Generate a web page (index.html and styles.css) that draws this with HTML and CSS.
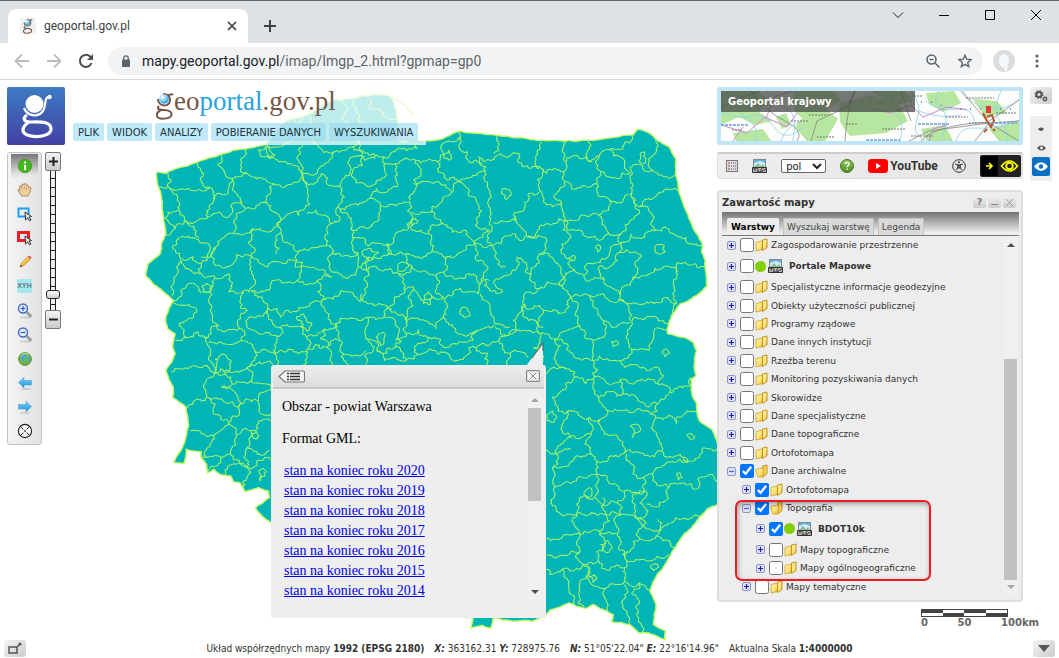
FILE: index.html
```html
<!DOCTYPE html>
<html lang="pl">
<head>
<meta charset="utf-8">
<title>geoportal.gov.pl</title>
<link rel="stylesheet" href="styles.css">
</head>
<body>
<svg class="defs" aria-hidden="true">
  <defs>
    <linearGradient id="gold" x1="0" y1="0" x2="1" y2="1"><stop offset="0" stop-color="#fff3a0"/><stop offset=".6" stop-color="#fae27a"/><stop offset="1" stop-color="#e0a920"/></linearGradient>
    <linearGradient id="leaf" x1="0" y1="0" x2="0" y2="1"><stop offset="0" stop-color="#8fc954"/><stop offset="1" stop-color="#4a8d1f"/></linearGradient>
    <linearGradient id="sky" x1="0" y1="0" x2="0" y2="1"><stop offset="0" stop-color="#79cdf7"/><stop offset="1" stop-color="#1d93da"/></linearGradient>
    <radialGradient id="ball" cx=".35" cy=".3" r=".7"><stop offset="0" stop-color="#fff"/><stop offset=".5" stop-color="#8fd3f3"/><stop offset="1" stop-color="#2ba3dc"/></radialGradient>
    <symbol id="i-folder" viewBox="0 0 13 14"><path d="M1 4.500L7.500 3v8.500L1 13z" fill="url(#gold)" stroke="#d2a124" stroke-width=".8"/><path d="M7.500 3V2L12 1v8.500l-4.500 3z" fill="url(#gold)" stroke="#c08a12" stroke-width=".9"/></symbol>
    <symbol id="i-folder-open" viewBox="0 0 13 14"><path d="M7.500 3V2L12 1v8.500l-4 3.500z" fill="#f3cf55" stroke="#c08a12" stroke-width=".9"/><path d="M.5 5.500L8.500 4v9H3z" fill="url(#gold)" stroke="#d2a124" stroke-width=".8"/></symbol>
    <symbol id="i-plus" viewBox="0 0 9 9"><rect x=".5" y=".5" width="8" height="8" rx="1.500" fill="#dfe2f7" stroke="#8c94c8"/><path d="M2 4.500h5M4.500 2v5" stroke="#1a1ac0" stroke-width="1.200"/></symbol>
    <symbol id="i-minus" viewBox="0 0 9 9"><rect x=".5" y=".5" width="8" height="8" rx="1.500" fill="#dfe2f7" stroke="#8c94c8"/><path d="M2 4.500h5" stroke="#5560b8" stroke-width="1.200"/></symbol>
    <symbol id="i-wms" viewBox="0 0 15 14"><rect x="1.500" y=".5" width="12" height="9" fill="#d4ecf7" stroke="#888"/><path d="M2 8l4-4 3 3 2-2 2 3v1H2z" fill="#8dbd90"/><path d="M2 1h11v3L8 2 2 4z" fill="#5fb4e2"/><rect x="0" y="8" width="15" height="6" rx="1" fill="#333"/><path d="M1.500 9.500v3h3v-3M3 9.500v3M6 12.500v-3h3v3M7.500 10v2.500M13.500 9.500h-3v1.500h3v1.500h-3" fill="none" stroke="#ddd" stroke-width=".8"/></symbol>
    <symbol id="i-lens" viewBox="0 0 16 16"><ellipse cx="9" cy="14.500" rx="6" ry="1" fill="#ccc"/><path d="M9.500 9l4.500 4.500" stroke="#888" stroke-width="2.600"/><path d="M9.500 9l4 4" stroke="#ccc" stroke-width="1"/><circle cx="6" cy="5.500" r="4.500" fill="#e4efff" stroke="#4568ce" stroke-width="1.400"/></symbol>
    <symbol id="i-g" viewBox="0 0 58 58"><circle cx="27.500" cy="17" r="9" fill="#fff"/><path d="M17 21c3 8 14 10 19 3 4-6 0-14 7-14.500" fill="none" stroke="#fff" stroke-width="2.200"/><circle cx="42.500" cy="10" r="2.200" fill="#fff"/><path d="M20 28c-5 3-3 7 3 7 10 0 21-1 21 7 0 10-28 10-28 1 0-4 3-6 6-8" fill="none" stroke="#fff" stroke-width="3.200"/></symbol>
    <symbol id="i-g-color" viewBox="0 0 18 29"><path d="M2 8c0 8 12 9 12 1 0-4-3-6-7-6M12 5c2-2 4-2 5-1M3 15c-3 3 1 4 5 4 5 0 9 2 7 6-2 3-13 4-14 0-1-3 2-5 4-6" fill="none" stroke="#755543" stroke-width="2"/><circle cx="8" cy="8" r="4.800" fill="url(#ball)"/></symbol>
    <symbol id="i-eye" viewBox="0 0 16 10"><path d="M0 5Q8-5 16 5 8 15 0 5z" fill="currentColor"/></symbol>
  </defs>
</svg>

<header class="browser">
  <div class="tabstrip">
    <div class="tab">
      <span class="favicon"><svg viewBox="0 0 18 29"><use href="#i-g-color"/></svg></span>
      <span class="tab-title">geoportal.gov.pl</span>
      <button class="plain" aria-label="Zamknij kartę"><svg width="10" height="10" viewBox="0 0 10 10"><path d="M1 1l8 8M9 1L1 9" stroke="#3c4043" stroke-width="1.700"/></svg></button>
    </div>
    <button class="plain new-tab" aria-label="Nowa karta"><svg width="12" height="12" viewBox="0 0 12 12"><path d="M6 0v12M0 6h12" stroke="#3c4043" stroke-width="2"/></svg></button>
    <div class="win">
      <button class="plain" aria-label="Karty"><svg width="12" height="12" viewBox="0 0 12 12"><path d="M1 3.500l5 5 5-5" fill="none" stroke="#222"/></svg></button>
      <button class="plain" aria-label="Minimalizuj"><svg width="12" height="12" viewBox="0 0 12 12"><path d="M1 6.500h10" stroke="#000"/></svg></button>
      <button class="plain" aria-label="Maksymalizuj"><svg width="12" height="12" viewBox="0 0 12 12"><path d="M1.500 1.500h9v9h-9z" fill="none" stroke="#000"/></svg></button>
      <button class="plain" aria-label="Zamknij"><svg width="12" height="12" viewBox="0 0 12 12"><path d="M1 1l10 10M11 1L1 11" stroke="#000"/></svg></button>
    </div>
  </div>
  <div class="navbar">
    <button class="plain" aria-label="Wstecz"><svg width="16" height="16" viewBox="0 0 16 16"><path d="M15 8H2M8 1.500L1.500 8 8 14.500" fill="none" stroke="#bbbdc0" stroke-width="1.800"/></svg></button>
    <button class="plain" aria-label="Dalej"><svg width="16" height="16" viewBox="0 0 16 16"><path d="M1 8h13M8 1.500L14.500 8 8 14.500" fill="none" stroke="#bbbdc0" stroke-width="1.800"/></svg></button>
    <button class="plain" aria-label="Odśwież"><svg width="16" height="16" viewBox="0 0 16 16"><path d="M13.500 10A6 6 0 1 1 12 3.500L14 5.500" fill="none" stroke="#4a4d51" stroke-width="2"/><path d="M15 1v6H9z" fill="#4a4d51"/></svg></button>
    <div class="omnibox">
      <svg width="10" height="13" viewBox="0 0 10 13"><rect x="1" y="4.500" width="8" height="7.500" rx="1" fill="#5f6368"/><path d="M2.700 5V3.200a2.300 2.300 0 0 1 4.600 0V5" fill="none" stroke="#5f6368" stroke-width="1.300"/></svg>
      <span class="url"><b>mapy.geoportal.gov.pl</b>/imap/Imgp_2.html?gpmap=gp0</span>
      <button class="plain" aria-label="Powiększenie"><svg width="14" height="14" viewBox="0 0 14 14"><circle cx="5.500" cy="5.500" r="4.500" fill="none" stroke="#5f6368" stroke-width="1.500"/><path d="M9 9l4.500 4.500M3.500 5.500h4" stroke="#5f6368" stroke-width="1.500"/></svg></button>
      <button class="plain" aria-label="Zakładka"><svg width="14" height="14" viewBox="0 0 14 14"><path d="M7 1.200l1.700 4 4.300.4-3.300 2.800 1 4.200L7 10.300l-3.700 2.300 1-4.200L1 5.600l4.300-.4z" fill="none" stroke="#5f6368" stroke-width="1.400"/></svg></button>
    </div>
    <button class="plain profile" aria-label="Profil"><svg width="22" height="22" viewBox="0 0 22 22"><circle cx="11" cy="11" r="11" fill="#dcdcdc"/><path d="M7 15c-2-5-1-11 4-11s6 6 4 11l-1 6h-3l1-4c-2 1-4 0-5-2z" fill="#f4f8fb"/></svg></button>
    <button class="plain" aria-label="Menu"><svg width="4" height="14" viewBox="0 0 4 14"><circle cx="2" cy="2" r="1.600" fill="#5f6368"/><circle cx="2" cy="7" r="1.600" fill="#5f6368"/><circle cx="2" cy="12" r="1.600" fill="#5f6368"/></svg></button>
  </div>
</header>

<main class="app">
  <svg class="map" viewBox="0 0 1568 1568" preserveAspectRatio="none" role="img" aria-label="Mapa powiatów">
    <defs>
      <path id="land" class="rough" data-amount="0.12" d="M45 155L70 160 100 145 150 128 220 102 290 85 338 74 369 30 396 2 450 -15 496 -45 523 -60 577 -65 613 -73 667 -76 685 -60 694 -20 698 20 694 60 712 65 790 62 820 55 865 33 930 42 1050 57 1150 63 1210 60 1335 43 1345 28 1375 38 1400 62 1430 80 1448 115 1448 165 1455 200 1480 280 1520 370 1518 395 1528 420 1533 495 1505 525 1460 550 1425 625 1427 640 1475 652 1495 665 1505 690 1498 735 1503 765 1490 775 1492 820 1505 850 1512 900 1545 925 1560 965 1590 1000 1600 1120 1560 1152 1535 1162 1505 1200 1470 1240 1430 1310 1378 1410 1395 1450 1388 1510 1420 1528 1420 1555 1375 1535 1350 1535 1325 1510 1275 1502 1280 1480 1260 1468 1225 1450 1205 1462 1160 1445 1110 1465 1095 1485 1060 1500 955 1490 948 1522 925 1512 895 1520 900 1490 700 1450 500 1330 355 1205 330 1185 312 1160 350 1130 348 1110 320 1100 285 1112 270 1085 252 1083 245 1065 215 1060 200 1045 183 1055 180 1030 165 1010 165 992 125 985 118 1028 92 1025 115 980 132 915 125 860 88 830 90 800 70 750 95 700 88 680 95 640 75 625 70 590 90 540 55 505 15 465 22 430 55 400 58 370 70 340 60 260 50 200Z"/>
      <clipPath id="coast"><use href="#land"/></clipPath>
    </defs>
    <use href="#land" class="land"/>
    <path class="hel" d="M680-70L715-45 735-20 740-10"/>
    <g clip-path="url(#coast)">
    <path class="border rough" d="M75 160V198L52 200M75 198L130 205 190 203 200 240 180 270 185 290 125 302 95 325 68 345M80 205L100 240 105 270 120 290 125 305M105 270L75 275 80 310 95 325M155 128L172 160 170 195 190 203M220 102L230 160 250 175 240 205 205 225 200 240M250 175L290 160 275 125 290 85M290 160L345 185 360 190M345 75L350 110 385 125 435 155 440 75M335 110L320 90 350 80 365 105ZM250 175V210L275 245 285 265 345 250 350 200 360 190 435 155M185 290L215 275 240 290 250 250 275 245M285 265L255 310 250 340M250 340L300 335 305 325 370 315 380 300M345 250L370 280 380 300 430 285 445 265 450 200 440 160 435 155 480 150 500 130 525 95M440 160L455 195 490 160 510 195 540 200 535 260 520 310M450 280L500 285 520 310 500 350 505 375 435 390 380 340V300M540 200L570 150 575 110 640 105 655 110M580 60L600 105 575 150 570 165 610 195 650 180 665 130 655 110 690 95 750 85 745 70M665 130L700 130 745 120 740 180 730 240M690 130L695 200 640 205 620 235M540 270L590 255 620 235 650 255 645 290 630 310 600 320 570 325 535 260M650 255L730 245 735 300 690 340 665 375M745 120L805 125 815 75 865 50M865 33L862 80 885 95 890 125 925 130M805 125V155L830 180 900 165 935 140 915 110 975 100 1025 100 1035 140 1080 145M740 190L800 185 845 215 860 180M845 215L810 250 785 275 735 275M860 185L880 200 910 300 945 330M935 150L940 250 945 290 950 375M955 100L965 45M1085 65L1075 100 1085 145 1100 160 1145 155 1150 125 1155 65M1085 145L1080 210 1115 260 1140 250 1150 185 1145 155M1080 215L1050 220 1010 280 1015 300 955 305M1010 290L1045 345 1035 360 950 375 905 370M1140 250L1150 300 1120 310 1045 350M1150 125L1220 125 1245 100 1270 90 1330 60 1335 40M1210 60L1220 125M1245 100L1240 150 1290 175 1325 160 1300 110 1270 90M1150 185L1235 190 1240 150M1235 190L1270 240 1330 215 1325 140M1325 140L1390 155 1445 165M1395 60L1390 155M1330 235L1350 260 1400 220 1460 218M1270 240L1240 285 1180 300 1150 300M1330 215L1340 240 1300 340V370M1350 260L1390 290 1395 330 1365 350 1300 370M1395 330L1420 320 1455 350 1485 370 1522 375M1240 285L1265 335 1240 360 1215 350 1175 330 1150 300M1300 370L1270 395 1250 415 1205 435 1200 465 1175 450 1165 350 1150 300M1265 335L1300 340M1045 350L1075 345 1100 360 1080 400 1130 430 1145 470 1135 495M1080 400L1065 440 1055 470 1020 410 980 470 955 490M935 475L945 510 980 510 960 490M1055 470L1075 505 1135 495M1075 505L1040 520 1035 550M1300 370L1290 400 1240 440 1255 475 1280 505 1310 545M1200 465L1205 480 1255 475M1290 400L1340 395 1355 410 1345 450 1330 480 1300 520M1455 455L1450 430 1500 430 1530 440M1330 480L1380 460 1450 450 1445 500 1440 520 1450 550 1380 545 1310 545M1175 450L1135 495 1165 530 1200 520 1250 520 1280 545 1310 545M1450 550L1440 580 1425 610 1330 600 1320 640M1310 545L1325 600M1165 530L1180 570 1190 620 1225 660 1260 640 1255 600 1225 560 1215 525M1035 550L1080 555 1100 570 1130 580 1160 560 1165 530M1090 570L1095 640 1120 655 1170 625 1190 615M1255 600L1275 620 1325 605M1320 640L1330 690 1375 690 1390 630 1425 625M1225 660V720L1300 720 1330 690M1120 655L1170 700 1225 720"/>
    <path class="border rough" d="M1120 655L1125 700 1150 745M1225 720V775L1205 790 1175 770 1160 745 1120 740 1095 760M1225 775L1240 830 1265 870 1245 895 1215 890 1170 870 1130 870 1115 830 1150 790 1175 770M1300 720L1310 740 1370 750 1400 740V790M1225 775L1300 775 1330 790 1400 790 1430 815 1490 770M1300 775L1310 820 1400 850 1380 880 1340 870 1265 870M1240 830L1310 820M1400 850L1430 820M1380 880L1395 890 1450 910 1510 880M1395 890L1400 950 1410 990 1365 1005 1310 995 1300 960 1255 940 1245 895M1410 990L1460 1000 1500 1020 1560 985M1460 1000L1480 1025 1400 1040 1385 1060 1430 1100 1500 1105 1540 1060 1580 1090M1385 1060L1360 1070M1430 1100L1420 1140 1370 1150M1215 890L1220 940V1000L1235 1020 1315 990M1160 870L1165 950 1130 975 1115 1040 1175 1010 1220 1000M1095 985L1165 985M1165 945L1220 940M1235 1020V1060L1180 1080 1120 1100 1115 1040M1235 1060L1230 1130 1290 1145 1310 1110 1265 1080 1235 1060M1315 1000L1330 1030 1360 1070 1365 1110 1310 1110M1290 1145L1300 1180 1260 1180 1250 1130M1230 1130L1180 1150 1180 1180M1365 1110L1330 1140 1340 1190 1370 1180 1365 1110M1300 1180L1340 1190 1490 1190 1530 1170M1120 1100L1125 1170 1180 1180 1260 1180 1270 1200M1180 1180L1190 1240 1240 1230 1270 1200M1100 1250L1190 1240V1290L1100 1300M1240 1230V1320L1200 1330 1190 1290M1300 1180L1290 1240 1310 1310 1350 1250 1345 1195M1240 1240L1290 1240M1400 1195L1395 1245 1450 1280M1350 1250L1395 1245M1310 1310L1370 1320 1430 1300M1240 1320L1310 1340V1380L1260 1400 1205 1370 1200 1330M1310 1340V1310M1080 1340L1140 1345 1200 1330M1140 1345L1160 1400 1168 1450M1200 1330V1460M1260 1400V1470M1310 1380L1350 1385 1380 1410M1310 1390L1305 1450 1325 1510M1350 1385L1345 1450 1360 1540M105 350L110 420 90 490 85 525M110 350L150 355 185 370V400L165 430 115 415M125 305L150 345 160 350M165 410L205 380 250 340M205 380L200 430 240 440 300 405 305 325M110 420L165 460 200 465 190 515 110 510 90 540M165 430V460M200 465L240 460V515L295 515 300 405M190 515V570L220 630 275 625 290 570 280 515M90 540L145 560V590L105 610 125 650 185 650 215 615M300 405L400 420 440 425 425 480 300 510M435 390L420 440 500 450 520 470M505 375L520 400 515 450 560 475 590 440 575 390 570 325M380 340L370 400M300 510L330 530 345 560 305 590 285 600M345 560L375 620 450 650 500 625M425 480L480 480 490 545 430 560 380 590 345 560M490 545L600 540 615 500 590 440M520 400L590 400M520 470L480 480M575 350L670 370 680 400 620 410 590 440M620 410L610 450 650 450 700 460 715 510 670 560 620 550 600 520M665 375L720 400 735 440 700 460M735 300L735 330 780 340 790 390 840 410 880 390 905 370M780 340L820 310 880 330 905 370M720 400L790 390M785 275L820 310M735 440L800 465 820 455 825 420 840 405M800 465L820 530 760 540 740 500 715 510M820 455L890 460 920 490 915 520 825 535M905 370L940 440 920 490 945 480M950 375L960 410 990 440M945 330L905 370M920 520L945 550 960 610 1000 620M1040 550L1010 600 1000 640 970 660 910 680M670 560L720 610 800 625 820 590 830 550 820 530M740 500L720 610M820 590L860 640 915 630 960 615M670 560L660 590 690 600V680L640 690 610 650 615 590 660 590M500 625L530 610 600 600 615 590M490 545L500 570 530 610 540 660 565 733M690 680L720 720 750 700 780 650 720 640 690 660M720 610V640M780 650L830 680 900 660 915 630M750 700L860 720 890 680 910 680 940 733M960 620L1040 630 1085 640M970 660L1000 700 1050 710M1000 700L990 733M1040 550L1050 600 1090 620M1085 640L1090 720M185 650V710L200 760 160 740 110 745 85 755M95 660L125 650M275 625V660L230 670 185 665M275 660L310 690 365 700M310 690L290 740M200 760L240 750 290 740 360 730M200 760L175 790 180 830 130 860M180 830L230 845 265 860 320 840 355 800M230 755L250 790 220 800 265 830 265 860M250 790L300 780 355 800M290 740L300 780M265 860L240 905 260 940 300 930 355 900M180 830L200 880 240 905 200 945 135 930M200 945L180 1010 165 1010M260 940L245 1000 220 1010 185 1050M180 1010L220 1010M300 930L290 980 350 990M245 1000L290 1040 355 1020M230 1060L260 1030 290 1040 280 1100M290 980L290 1040M320 840L330 880 355 880M375 620L370 660 365 700 370 733M285 600L330 640 370 645M450 650V690L440 733M500 625L505 680 520 733M365 700L450 690 505 680 540 660M610 650V733M550 700L610 690M640 690L660 720 720 720"/>
    <path class="border rough" d="M338 74L480 75 525 95 575 80 640 105M396 2L430 10 450 -15M450 -15L470 75M523 -60L560 -30 545 -10 575 30 575 80M577 -65L590 -20 610 10 620 60M613 -73L620 -40 650 -30 675 0 698 0M620 60L694 60M976 220L985 205 1000 210 1003 225 990 238ZM1352 100L1365 96 1368 115 1358 132 1349 122ZM825 100L835 90 842 105 835 120 823 115ZM1392 378L1405 372 1418 378 1420 395 1405 402 1393 395ZM1231 378L1240 373 1245 385 1237 395ZM1160 412L1170 405 1178 412 1168 422ZM168 495L180 489 194 497 190 512 175 515ZM422 590L440 580 450 600 465 610 452 632 435 620ZM645 640L658 635 660 665 650 675 643 660ZM697 435L715 427 727 437 715 450 697 452ZM867 565L880 560 890 575 877 592 867 582ZM768 525L780 515 794 530 785 553 766 550ZM600 395L625 385 645 395 630 410 625 420 605 408ZM1275 662L1287 660 1292 673 1280 678ZM1410 695L1425 688 1432 697 1420 708ZM1102 880L1115 870 1125 885 1112 905 1100 900ZM1325 915L1340 910 1352 920 1345 935 1330 950ZM1478 944L1490 938 1500 947 1488 955ZM1450 1062L1460 1056 1466 1070 1455 1076ZM1245 1270L1265 1258 1275 1275 1262 1295 1250 1285ZM1214 1365L1228 1360 1236 1370 1224 1383ZM1383 1332L1395 1328 1402 1338 1388 1348ZM303 938L315 932 322 945 308 954ZM320 1050L332 1042 338 1065 325 1080ZM203 715L225 700 238 715 232 755 210 758ZM733 298L745 294 748 310 735 318ZM1200 1120L1215 1100 1222 1108 1208 1132Z"/>
    </g>
  </svg>

  <div class="workspace">
    <div class="left">
      <div class="head">
        <svg class="logo" viewBox="0 0 58 58" role="img" aria-label="Geoportal"><use href="#i-g"/></svg>
        <div class="masthead">
          <div class="brand"><svg width="18" height="29"><use href="#i-g-color"/></svg><span>eo<i>portal</i>.gov.pl</span></div>
          <nav class="menu"><button>PLIK</button><button>WIDOK</button><button>ANALIZY</button><button>POBIERANIE DANYCH</button><button>WYSZUKIWANIA</button></nav>
        </div>
      </div>
      <div class="tools">
        <div class="toolbox">
          <button class="on" aria-label="Informacja"><svg viewBox="0 0 16 16"><circle cx="8" cy="8" r="6.700" fill="#41b81b" stroke="#2e8a12" stroke-width=".6"/><path d="M8 3.500v2M8 7v5" stroke="#fff" stroke-width="2"/></svg></button>
          <button aria-label="Przesuń"><svg viewBox="0 0 16 16"><path d="M4 13L1 8.500c-.5-1.500 1-1.500 2 0L2.500 5c0-1.500 1.500-1.500 2 0L5 3c.2-1.500 1.900-1.500 2 0l.3-1c.4-1 1.800-1 1.900.5L9.500 4c.5-1.500 2-1 2 .5V6c1-1.500 2.500-1 2.500 0L13 10l-2 4H5z" fill="#f0cfa0" stroke="#a98457" stroke-width=".9"/><path d="M5 5l.8 3M7.500 4l.3 3.500M9.800 5l-.2 3" stroke="#c29a66" stroke-width=".7"/></svg></button>
          <button aria-label="Wybierz"><svg viewBox="0 0 16 16"><rect x="1.500" y="2.500" width="10" height="8" fill="none" stroke="#1aa0e8" stroke-width="2"/><path d="M8 6l6.500 4.500-2.500.6 2 2.900-1.600.8-1.800-2.800L8.500 14z" fill="#ddd" stroke="#222" stroke-width=".9"/></svg></button>
          <button aria-label="Usuń wybór"><svg viewBox="0 0 16 16"><rect x="1.500" y="2.500" width="10" height="8" fill="none" stroke="#ec1c24" stroke-width="3"/><path d="M8 6l6.500 4.500-2.500.6 2 2.900-1.600.8-1.800-2.800L8.500 14z" fill="#ddd" stroke="#222" stroke-width=".9"/></svg></button>
          <button aria-label="Rysuj"><svg viewBox="0 0 16 16"><path d="M3 13l1.500-4L11 2.500 13.500 5 7 11.500z" fill="#f4b731" stroke="#b57a1a" stroke-width=".6"/><path d="M11 2.500l1.500-1 2 2-1 1.500z" fill="#d9455a"/><path d="M3 13l.7-2 1.300 1.300z" fill="#222"/><path d="M5.500 9.500L11.500 3.500" stroke="#ffe08a"/></svg></button>
          <button aria-label="Współrzędne"><span class="xyh">XYH</span></button>
          <button aria-label="Powiększ"><svg viewBox="0 0 16 16"><use href="#i-lens"/><path d="M3.500 5.500h5M6 3v5" stroke="#2f55c4" stroke-width="1.200"/></svg></button>
          <button aria-label="Pomniejsz"><svg viewBox="0 0 16 16"><use href="#i-lens"/><path d="M3.500 5.500h5" stroke="#2f55c4" stroke-width="1.200"/></svg></button>
          <button aria-label="Pełny zasięg"><svg viewBox="0 0 16 16"><circle cx="8" cy="8" r="6.300" fill="#72b63a" stroke="#4c8a2c"/><path d="M4 4l4-1 1 3-2 2 1 4-3-2-1-3zM10 4l3 3-1 4-2-2z" fill="#4ba7e0"/><path d="M3.500 5.500Q8-.5 12 4.500" stroke="#c6e89c" fill="none"/></svg></button>
          <button aria-label="Poprzedni widok"><svg viewBox="0 0 16 16"><ellipse cx="9" cy="14" rx="5" ry="1" fill="#ccc"/><path d="M1.500 7.500L7 2.500v3h7.500v4.500H7v3z" fill="url(#sky)" stroke="#4aa3d6" stroke-width=".6"/></svg></button>
          <button aria-label="Następny widok"><svg viewBox="0 0 16 16"><ellipse cx="8" cy="14" rx="5" ry="1" fill="#ccc"/><path d="M14.500 7.500L9 2.500v3H1.500v4.500H9v3z" fill="url(#sky)" stroke="#4aa3d6" stroke-width=".6"/></svg></button>
          <button aria-label="Wyczyść"><svg viewBox="0 0 16 16"><circle cx="8" cy="8" r="6.600" fill="#f4f4f4" stroke="#222" stroke-width="1.100"/><path d="M3.400 3.400l3 3M9.600 9.600l3 3M12.600 3.400l-3 3M6.400 9.600l-3 3M7.400 7.400l1.200 1.200M8.600 7.400L7.400 8.600" stroke="#222"/></svg></button>
        </div>
        <div class="zoom">
          <button aria-label="Przybliż"><svg width="11" height="11" viewBox="0 0 11 11"><path d="M5.500 1v9M1 5.500h9" stroke="#222" stroke-width="2"/></svg></button>
          <div class="track"><span class="thumb"></span></div>
          <button aria-label="Oddal"><svg width="11" height="11" viewBox="0 0 11 11"><path d="M1 5.500h9" stroke="#222" stroke-width="2"/></svg></button>
        </div>
      </div>
    </div>

    <div class="right">
      <div class="overview">
        <svg viewBox="0 0 298 50" preserveAspectRatio="xMidYMid slice" aria-hidden="true">
          <path fill="#fdfdfb" d="M0 0h298v50H0z"/>
          <path fill="#b7e6a0" d="M0 0h35l12 8-9 13 14 9-18 4-16-8-18 8zM72 0h40l8 10-15 8 7 13-22 4-16-14zM85 22l18-6 14 12-13 22H86l-12-14zM118 12l32-8 27 8 10 18-22 12-36 3-10-14zM150 0h34l8 9-18 6zM205 2l28-2 7 12-18 9-14-8zM252 8l24 2 10 12-22 4zM200 38l24-4 8 16h-26zM268 38l30-8v20h-20zM12 42l30-4 8 12H15zM55 26l10-4 5 12-9 4z"/>
          <path fill="none" stroke="#8fd3ea" stroke-width=".8" d="M0 21q18 8 30 4t24 12 30-3M45 0q8 13 20 17t7 33M165 0q-4 18 8 22t6 28M218 0q-8 10 2 17t0 32M242 0q7 14 26 17t30-9M235 50q4-15 20-13t43-8M198 20q20 8 42 4M10 0q4 20 16 28t9 22M280 0q-10 20 0 32t5 18M190 0q12 14 6 28t8 22M60 50q4-14 20-20M205 10q14 12 30 8t20 16"/>
          <path fill="none" stroke="#858585" stroke-width=".8" d="M0 16Q20 5 40 0M30 0q14 20 34 30t12 20M134 0q-8 16-10 50M200 50q14-16 67-19l31-22M268 32L240 0M268 32L298 50M268 32l-14 18M268 32l30-2M180 0q6 20 10 30M268 32l-60 8-20 10M90 50l6-20 30-14 8-16"/>
          <path fill="none" stroke="#c98bd6" stroke-width="1" d="M0 34l26 8 18-16 22 10 10-14M150 18l20 4 20-8 12 12 24-10 20 3M45 28l8-22 18-6M12 50l10-14M208 50l4-12 14-4"/>
          <path fill="none" stroke="#5466dc" stroke-width="1.400" stroke-dasharray="1 9" d="M130 11h80l24 7h60"/>
          <path fill="none" stroke="#b5552b" stroke-width="2" d="M262 22l4 8M266 30l4 6 3-6-2-6-5 2M266 38l-3 3M272 38l2 2"/>
          <path fill="#df3b35" d="M265 15h5v7h-5z"/><path fill="none" stroke="#6d9be0" stroke-width="1.500" stroke-dasharray="3 1" d="M0 34h28M197 33h32M270 32h26M145 49h34"/>
          <path fill="none" stroke="#777" stroke-width="1" stroke-dasharray="2 1" d="M11 39h10M36 14h15M70 30h17M88 24h20M125 33h11M161 38h24M225 26h22M245 7h28M275 22h20M248 32h20M96 46h18M190 5h12M190 45h22"/>
        </svg>
        <strong>Geoportal krajowy</strong>
      </div>

      <div class="quickbar">
        <button class="plain" aria-label="Lista"><svg width="12" height="12" viewBox="0 0 12 12"><rect x=".5" y=".5" width="11" height="11" fill="#ddd" stroke="#777"/><path d="M2 3h2M2 6h2M2 9h2" stroke="#c33"/><path d="M5 3h5M5 6h5M5 9h5" stroke="#557" stroke-dasharray="1 1"/></svg></button>
        <button class="plain" aria-label="WMS"><svg width="15" height="14"><use href="#i-wms"/></svg></button>
        <select aria-label="Język"><option>pol</option></select>
        <button class="plain" aria-label="Pomoc"><svg width="14" height="14" viewBox="0 0 14 14"><circle cx="7" cy="7" r="6.500" fill="url(#leaf)" stroke="#3d7a24"/><path d="M5 5.200c.2-2.400 4-2.300 4 0 0 1.500-2 1.400-2 3.100M7 9.500v1.500" fill="none" stroke="#fff" stroke-width="1.400"/></svg></button>
        <a class="yt" href="#"><svg width="20" height="14" viewBox="0 0 20 14"><rect width="20" height="14" rx="3.500" fill="#f00"/><path d="M8 4v6l5-3z" fill="#fff"/></svg>YouTube</a>
        <button class="plain" aria-label="Dostępność"><svg width="14" height="14" viewBox="0 0 14 14"><circle cx="7" cy="7" r="6.300" fill="none" stroke="#333"/><circle cx="7" cy="3.300" r="1" fill="#333"/><path d="M3 5l3 .8v2L4.500 11M11 5l-3 .8v2L9.500 11M6 6h2v3H6z" fill="none" stroke="#333"/></svg></button>
        <button class="plain contrast" aria-label="Kontrast"><svg width="41" height="22" viewBox="0 0 41 22"><rect width="41" height="22" rx="2" fill="#222"/><rect x="1" y="1" width="17" height="20" rx="2" fill="#000"/><path d="M6 11h6M9 8l3 3-3 3" fill="none" stroke="#ff0" stroke-width="1.700"/><path d="M21.500 11q8-10 16 0-8 10-16 0z" fill="none" stroke="#ff0" stroke-width="1.600"/><circle cx="29.500" cy="11" r="3.300" fill="none" stroke="#ff0" stroke-width="1.900"/></svg></button>
      </div>

      <section class="panel">
        <div class="panel-head"><h2>Zawartość mapy</h2><button aria-label="Pomoc">?</button><button aria-label="Zwiń"><svg width="13" height="11" viewBox="0 0 13 11"><path d="M3 7.500h7" stroke="#888"/></svg></button><button aria-label="Zamknij"><svg width="13" height="11" viewBox="0 0 13 11"><path d="M3 2l7 7M10 2L3 9" stroke="#999"/></svg></button></div>
        <div class="tabs"><button class="active">Warstwy</button><button>Wyszukaj warstwę</button><button>Legenda</button></div>
        <div class="tree-wrap">
          <ul class="tree">
            <li><svg class="ex"><use href="#i-plus"/></svg><label><input type="checkbox"><svg class="fo"><use href="#i-folder"/></svg>Zagospodarowanie przestrzenne</label></li>
            <li class="wms"><svg class="ex"><use href="#i-plus"/></svg><label><input type="checkbox"><span class="dot"></span><svg class="wm"><use href="#i-wms"/></svg>Portale Mapowe</label></li>
            <li><svg class="ex"><use href="#i-plus"/></svg><label><input type="checkbox"><svg class="fo"><use href="#i-folder"/></svg>Specjalistyczne informacje geodezyjne</label></li>
            <li><svg class="ex"><use href="#i-plus"/></svg><label><input type="checkbox"><svg class="fo"><use href="#i-folder"/></svg>Obiekty użyteczności publicznej</label></li>
            <li><svg class="ex"><use href="#i-plus"/></svg><label><input type="checkbox"><svg class="fo"><use href="#i-folder"/></svg>Programy rządowe</label></li>
            <li><svg class="ex"><use href="#i-plus"/></svg><label><input type="checkbox"><svg class="fo"><use href="#i-folder"/></svg>Dane innych instytucji</label></li>
            <li><svg class="ex"><use href="#i-plus"/></svg><label><input type="checkbox"><svg class="fo"><use href="#i-folder"/></svg>Rzeźba terenu</label></li>
            <li><svg class="ex"><use href="#i-plus"/></svg><label><input type="checkbox"><svg class="fo"><use href="#i-folder"/></svg>Monitoring pozyskiwania danych</label></li>
            <li><svg class="ex"><use href="#i-plus"/></svg><label><input type="checkbox"><svg class="fo"><use href="#i-folder"/></svg>Skorowidze</label></li>
            <li><svg class="ex"><use href="#i-plus"/></svg><label><input type="checkbox"><svg class="fo"><use href="#i-folder"/></svg>Dane specjalistyczne</label></li>
            <li><svg class="ex"><use href="#i-plus"/></svg><label><input type="checkbox"><svg class="fo"><use href="#i-folder"/></svg>Dane topograficzne</label></li>
            <li><svg class="ex"><use href="#i-plus"/></svg><label><input type="checkbox"><svg class="fo"><use href="#i-folder"/></svg>Ortofotomapa</label></li>
            <li><svg class="ex"><use href="#i-minus"/></svg><label><input type="checkbox" checked><svg class="fo"><use href="#i-folder-open"/></svg>Dane archiwalne</label></li>
            <li class="l1"><svg class="ex"><use href="#i-plus"/></svg><label><input type="checkbox" checked><svg class="fo"><use href="#i-folder"/></svg>Ortofotomapa</label></li>
            <li class="l1"><svg class="ex"><use href="#i-minus"/></svg><label><input type="checkbox" checked><svg class="fo"><use href="#i-folder-open"/></svg>Topografia</label></li>
            <li class="l2 wms"><svg class="ex"><use href="#i-plus"/></svg><label><input type="checkbox" checked><span class="dot"></span><svg class="wm"><use href="#i-wms"/></svg>BDOT10k</label></li>
            <li class="l2"><svg class="ex"><use href="#i-plus"/></svg><label><input type="checkbox"><svg class="fo"><use href="#i-folder"/></svg>Mapy topograficzne</label></li>
            <li class="l2"><svg class="ex"><use href="#i-plus"/></svg><label><input type="checkbox"><svg class="fo"><use href="#i-folder"/></svg>Mapy ogólnogeograficzne</label></li>
            <li class="l1"><svg class="ex"><use href="#i-plus"/></svg><label><input type="checkbox"><svg class="fo"><use href="#i-folder"/></svg>Mapy tematyczne</label></li>
          </ul>
          <div class="scroll tree-scroll"><i class="up dark"></i><span></span><i class="down"></i></div>
          <div class="mark"></div>
        </div>
      </section>
      <div class="scale"><div class="bar"></div><div class="nums"><span>0</span><span>50</span><span>100km</span></div></div>
    </div>

    <div class="rail">
      <button class="gears" aria-label="Ustawienia"><svg width="14" height="12" viewBox="0 0 14 12"><circle cx="5" cy="4.500" r="2.600" fill="none" stroke="#555" stroke-width="2"/><circle cx="5" cy="4.500" r="3.900" fill="none" stroke="#555" stroke-width="1.200" stroke-dasharray="1.600 1.460"/><circle cx="11" cy="9" r="1.700" fill="none" stroke="#555" stroke-width="1.500"/></svg></button>
      <div class="eyes">
        <button class="plain" aria-label="Mały kontrast"><svg width="6" height="4" viewBox="0 0 16 10"><use href="#i-eye"/></svg></button>
        <button class="plain" aria-label="Średni kontrast"><svg width="9" height="6" viewBox="0 0 16 10"><use href="#i-eye"/><circle cx="8" cy="5" r="2.500" fill="#eee"/></svg></button>
        <button class="plain active" aria-label="Duży kontrast"><svg width="14" height="9" viewBox="0 0 16 10"><use href="#i-eye"/><circle cx="8" cy="5" r="2.500" fill="#0a70c4"/></svg></button>
      </div>
    </div>
  </div>

  <section class="popup">
    <svg class="pointer" width="18" height="24" viewBox="0 0 18 24"><path d="M0 24L17 1v23z" fill="#eee"/><path d="M6 16L17 1v8" fill="none" stroke="#555"/></svg>
    <div class="popup-head">
      <button class="plain" aria-label="Lista"><svg width="27" height="13" viewBox="0 0 27 13"><path d="M7 1h18q1.500 0 1.500 1.500v8q0 1.500-1.500 1.500H7L1 6.500z" fill="#f4f4f4" stroke="#777" stroke-width="1.200"/><path d="M12 3.500h10M12 6.500h10M12 9.500h10M9 3.500h2M9 6.500h2M9 9.500h2" stroke="#333" stroke-width="1.400"/></svg></button>
      <button class="plain" aria-label="Zamknij"><svg width="14" height="12" viewBox="0 0 14 12"><rect x=".6" y=".6" width="12.800" height="10.800" rx="1" fill="#f4f4f4" stroke="#888" stroke-width="1.200"/><path d="M3.500 2.500l7 7M10.500 2.500l-7 7" stroke="#888"/></svg></button>
    </div>
    <div class="popup-body">
      <div class="copy">
        <p>Obszar - powiat Warszawa</p>
        <p>Format GML:</p>
        <ul><li><a href="#">stan na koniec roku 2020</a></li><li><a href="#">stan na koniec roku 2019</a></li><li><a href="#">stan na koniec roku 2018</a></li><li><a href="#">stan na koniec roku 2017</a></li><li><a href="#">stan na koniec roku 2016</a></li><li><a href="#">stan na koniec roku 2015</a></li><li><a href="#">stan na koniec roku 2014</a></li></ul>
      </div>
      <div class="scroll"><i class="up"></i><span></span><i class="down dark"></i></div>
    </div>
  </section>

  <footer class="status">
    <button aria-label="Nowe okno"><svg width="14" height="12" viewBox="0 0 14 12"><path d="M1 5h8v6H1zM9 5l3-3" fill="none" stroke="#555" stroke-width="1.500"/><circle cx="12" cy="2" r="1.500" fill="#555"/></svg></button>
    <p><span>Układ współrzędnych mapy <b>1992 (EPSG 2180)</b></span><span><b><i>X:</i></b> 363162.31 <b><i>Y:</i></b> 728975.76</span><span><b><i>N:</i></b> 51°05'22.04" <b><i>E:</i></b> 22°16'14.96"</span><span>Aktualna Skala <b>1:4000000</b></span></p>
    <button aria-label="Zwiń pasek"><svg width="12" height="7" viewBox="0 0 12 7"><path d="M0 0h12L6 7z" fill="#555"/></svg></button>
  </footer>
</main>
<script src="map.js"></script>
</body>
</html>
```
FILE: map.js
```js
// Adds natural irregularity to the generalised administrative boundaries.
// The offset depends only on a segment's two ends, so shared edges stay shared.
function noise(a, b) {
  const v = Math.sin((a[0] + b[0]) * 12.9898 + (a[1] + b[1]) * 78.233) * 43758.5453;
  return v - Math.floor(v) - 0.5;
}

function subdivide(a, b, amount, out) {
  const dx = b[0] - a[0];
  const dy = b[1] - a[1];
  if (Math.hypot(dx, dy) < 9) {
    out.push(b);
    return;
  }
  const sign = dx > 0 || (dx === 0 && dy > 0) ? 1 : -1;
  const k = noise(a, b) * amount * sign;
  const mid = [(a[0] + b[0]) / 2 - dy * k, (a[1] + b[1]) / 2 + dx * k];
  subdivide(a, mid, amount, out);
  subdivide(mid, b, amount, out);
}

function parse(d) {
  const lines = [];
  let line = null;
  let command = "";
  const tokens = d.match(/[MLHVZ]|-?[\d.]+/g);
  for (let i = 0; i < tokens.length;) {
    if (/[MLHVZ]/.test(tokens[i])) command = tokens[i++];
    if (command === "Z") {
      line.push(line[0]);
      continue;
    }
    const last = line && line[line.length - 1];
    if (command === "H") line.push([+tokens[i++], last[1]]);
    else if (command === "V") line.push([last[0], +tokens[i++]]);
    else {
      const point = [+tokens[i++], +tokens[i++]];
      if (command === "M") {
        line = [point];
        lines.push(line);
        command = "L";
      } else line.push(point);
    }
  }
  return lines;
}

document.querySelectorAll(".rough").forEach((path) => {
  const amount = Number(path.dataset.amount || 0.62);
  const d = parse(path.getAttribute("d")).map((line) => {
    const out = [line[0]];
    for (let i = 1; i < line.length; i++) subdivide(line[i - 1], line[i], amount, out);
    return "M" + out.map((p) => p[0].toFixed(1) + " " + p[1].toFixed(1)).join("L");
  });
  path.setAttribute("d", d.join(""));
});
```
FILE: styles.css
```css
* { box-sizing: border-box; }
body { margin: 0; min-height: 100vh; display: flex; flex-direction: column; background: #fff; color: #333; font: 9px "DejaVu Sans", sans-serif; overflow: hidden; }
p, h2, ul { margin: 0; padding: 0; list-style: none; }
svg { display: block; flex: none; }
button { font: inherit; color: inherit; padding: 0; }
.plain { border: 0; background: none; display: flex; align-items: center; justify-content: center; }
.defs { position: absolute; width: 0; height: 0; }

.browser { border-top: 1px solid #66676a; border-bottom: 1px solid #d6d7d9; font-family: "Roboto", "Open Sans", sans-serif; }
.tabstrip { height: 42px; display: flex; align-items: flex-end; background: #dee1e6; padding-left: 8px; }
.tab { width: 240px; height: 34px; border-radius: 8px 8px 0 0; background: #fff; display: flex; align-items: center; gap: 8px; padding: 0 11px 0 12px; font-size: 12px; color: #3c4043; }
.tab-title { flex: 1; }
.favicon { width: 16px; height: 16px; background: #f1f1f1; display: flex; justify-content: center; }
.favicon svg { width: 10px; height: 16px; }
.new-tab { height: 34px; width: 44px; }
.win { margin-left: auto; display: flex; align-self: flex-start; height: 28px; }
.win .plain { width: 46px; }
.navbar { height: 36px; display: flex; align-items: center; padding: 0 20px 0 14px; gap: 16px; }
.omnibox { flex: 1; height: 28px; border-radius: 14px; background: #f1f3f4; display: flex; align-items: center; gap: 11px; padding: 0 11px 0 13px; margin-left: -2px; font-size: 14px; color: #5f6368; }
.omnibox .plain + .plain { margin-left: 7px; }
.url { flex: 1; }
.url b { font-weight: 400; color: #202124; }
.profile { margin-left: -6px; }
.navbar > .plain:last-child { margin-left: 4px; }

.app { position: relative; flex: 1; display: flex; flex-direction: column; }
.map { position: absolute; left: 140px; top: 40px; width: 580px; height: 524px; overflow: visible; }
.land { fill: #00b5b5; stroke: #c0fb5e; stroke-width: 4; }
.border { fill: none; stroke: #a6f268; stroke-width: 3; stroke-linejoin: round; }
.hel { fill: none; stroke: #a6f268; stroke-width: 4; }

.workspace { position: relative; flex: 1; display: flex; align-items: flex-start; padding: 7px 7px 0; }
.left { flex: 1; }
.head { display: flex; width: 419px; height: 58px; gap: 8px; background: rgba(255,255,255,.75); }
.logo { width: 58px; height: 58px; border-radius: 2px; background: linear-gradient(#3d7bc2, #4340a4); }
.masthead { display: flex; flex-direction: column; justify-content: space-between; padding-bottom: 4px; }
.brand { display: flex; align-items: flex-start; height: 32px; margin-left: 83px; padding-top: 4px; font: 27px/20px "Liberation Serif", serif; color: #755543; }
.brand i { font-style: normal; color: #29a3de; }
.menu { display: flex; gap: 3px; }
.menu button { height: 18px; border: 0; border-radius: 2px; background: rgba(150,216,240,.6); padding: 0 5px; color: #183540; font-size: 10px; white-space: nowrap; }
.tools { display: flex; gap: 3px; align-items: flex-start; margin-top: 7px; }
.toolbox { width: 35px; border: 1px solid #c5c5c5; border-radius: 3px; background: linear-gradient(90deg,#f4f4f4,#e2e2e2); padding: 1px 3px; display: flex; flex-direction: column; height: 293px; }
.toolbox button { flex: 1; border: 0; background: none; display: flex; align-items: center; justify-content: center; }
.toolbox .on { background: linear-gradient(#777, #e8e8e8 90%); }
.toolbox button > svg { width: 16px; height: 16px; }
.xyh { width: 15px; height: 14px; background: #a4e8ed; border-radius: 2px; font-size: 7px; line-height: 14px; color: #445; text-align: center; }
.zoom { display: flex; flex-direction: column; align-items: center; width: 16px; }
.zoom button { width: 16px; height: 19px; border: 1px solid #777; border-radius: 2px; background: linear-gradient(#f4f4f4, #ccc); display: flex; align-items: center; justify-content: center; }
.track { position: relative; width: 6px; height: 139px; border: solid #222; border-width: 0 1px; background: repeating-linear-gradient(#eee 0 7px, #222 7px 8px, #eee 8px 9px); }
.thumb { position: absolute; left: -5px; top: 119px; width: 14px; height: 9px; border: 1px solid #222; border-radius: 3px; background: linear-gradient(#fff, #ccc); }

.right { width: 306px; display: flex; flex-direction: column; gap: 7px; }
.overview { position: relative; height: 58px; border: 4px solid #bee6f7; border-radius: 2px; }
.overview svg { width: 100%; height: 100%; }
.overview strong { position: absolute; left: 0; top: 0; width: 65%; height: 21px; background: rgba(70,74,70,.75); color: #fff; font-size: 10px; line-height: 21px; padding-left: 7px; }
.quickbar { height: 27px; display: flex; align-items: center; justify-content: space-between; border: 1px solid #ddd; border-top: 2px solid #ccc; border-radius: 2px; background: linear-gradient(90deg, #eee, #e4e4e4); padding: 0 1px 0 8px; }
.quickbar select { width: 45px; height: 14px; border: 1px solid #666; border-radius: 2px; background: #fff; color: #222; font: 10px "DejaVu Sans", sans-serif; padding: 0; }
.yt { display: flex; align-items: center; gap: 2px; color: #333; text-decoration: none; font: bold 12px "Liberation Sans Narrow", "Roboto", sans-serif; }

.panel { height: 412px; margin-top: 4px; border: 2px solid #dedede; border-radius: 4px; background: #ededed; padding: 0 2px 4px 3px; display: flex; flex-direction: column; }
.panel-head { height: 20px; display: flex; align-items: center; gap: 2px; padding-right: 3px; }
.panel-head h2 { flex: 1; font-size: 10px; }
.panel-head button { width: 13px; height: 11px; border: 0; border-radius: 2px; background: linear-gradient(#eee, #ccc); font-weight: bold; line-height: 10px; color: #777; }
.tabs { height: 24px; display: flex; align-items: flex-end; gap: 4px; padding-left: 5px; background: linear-gradient(#747474, #ededed 90%); border-bottom: 1px solid #777; }
.tabs button { height: 17px; padding: 0 3px; border: 1px solid #c4c4c4; border-bottom: 0; border-radius: 2px 2px 0 0; background: #d9d9d9; color: #444; white-space: nowrap; }
.tabs .active { background: #ededed; border-color: #ededed; font-weight: bold; color: #000; }
.tree-wrap { position: relative; flex: 1; display: flex; padding-right: 1px; }
.tree { flex: 1; display: flex; flex-direction: column; padding-left: 5px; }
.tree li { flex: 18; display: flex; align-items: center; gap: 4px; white-space: nowrap; }
.tree .wms { flex: 23; font-weight: bold; }
.tree .l1 { padding-left: 15px; }
.tree .l2 { padding-left: 29px; }
.tree label { display: flex; align-items: center; }
.tree input { width: 14px; height: 14px; margin: 0 1px 0 0; }
.ex { width: 9px; height: 9px; }
.fo { width: 13px; height: 14px; margin-right: 3px; }
.dot { width: 11px; height: 11px; border-radius: 50%; background: #84ce05; margin: 0 2px 0 0; }
.wm { width: 15px; height: 14px; margin-right: 6px; }
.scroll { width: 15px; display: flex; flex-direction: column; align-items: center; justify-content: space-between; background: #f0f0f0; }
.scroll span { width: 13px; background: #c1c1c1; }
.scroll i { border: 4px solid transparent; color: #a3a3a3; }
.scroll .dark { color: #505050; }
.scroll .up { border-top: 0; border-bottom-color: currentColor; }
.scroll .down { border-bottom: 0; border-top-color: currentColor; }
.tree-scroll { padding: 7px 0; }
.tree-scroll span { height: 221px; margin: auto 0 5px; }
.mark { position: absolute; left: 13px; top: 264px; width: 196px; height: 81px; border: 2px solid #ed1c24; border-radius: 7px; box-shadow: inset 1px 2px 5px rgba(0,0,0,.35); pointer-events: none; }

.scale { width: 118px; align-self: flex-end; margin-right: -16px; font-weight: bold; font-size: 10px; color: #666; }
.bar { width: 87px; height: 8px; border: 1px solid #444; background: linear-gradient(90deg, #444 25%, #fff 25% 50%, #444 50% 75%, #fff 75%) top / 100% 3px no-repeat, linear-gradient(90deg, #fff 25%, #444 25% 50%, #fff 50% 75%, #444 75%); }
.nums { display: flex; justify-content: space-between; }

.rail { width: 29px; padding-left: 7px; display: flex; flex-direction: column; gap: 12px; }
.gears, .status button { width: 22px; height: 17px; border: 0; border-radius: 3px; background: linear-gradient(135deg, #f4f4f4, #ccc); display: flex; align-items: center; justify-content: center; flex: none; }
.eyes { height: 65px; border-radius: 2px; background: #eee; color: #555; display: flex; flex-direction: column; align-items: center; justify-content: flex-end; padding-bottom: 5px; }
.eyes .plain { width: 18px; height: 19px; }
.eyes .active { background: #0a70c4; color: #fff; border-radius: 2px; }

.popup { position: absolute; left: 271px; top: 285px; width: 275px; height: 253px; background: #eee; border-radius: 3px; display: flex; flex-direction: column; }
.pointer { position: absolute; right: 2px; top: -23px; }
.popup-head { height: 24px; margin: 0 2px; padding: 0 4px 0 5px; display: flex; align-items: center; justify-content: space-between; background: linear-gradient(#eee, #dcdcdc); border-bottom: 2px solid #c8c8c8; }
.popup-body { flex: 1; display: flex; padding: 3px 4px 16px 11px; color: #000; font: 14px/20px "Liberation Serif", serif; }
.copy { flex: 1; display: flex; flex-direction: column; gap: 12px; padding-top: 5px; }
.copy ul { padding-left: 2px; }
.copy a { color: #0000e6; }
.popup-body .scroll { padding: 6px 0 8px; justify-content: flex-start; }
.popup-body .scroll span { height: 93px; margin: 6px 0 auto; }

.status { position: relative; display: flex; align-items: center; justify-content: space-between; padding: 0 4px 1px; height: 19px; }
.status p { display: flex; gap: 10px; white-space: nowrap; font: 10px "DejaVu Sans Condensed", "DejaVu Sans", sans-serif; }
```
